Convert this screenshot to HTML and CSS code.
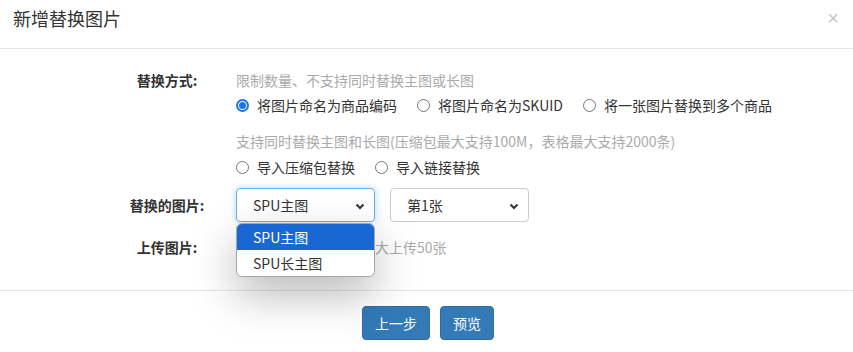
FILE: index.html
```html
<!DOCTYPE html>
<html lang="zh-CN">
<head>
    <meta charset="UTF-8">
    <title>新增替换图片</title>
    <link rel="stylesheet" href="styles.css">
</head>
<body>
    <div class="modal">
        <div class="modal-header">
            <span class="modal-title">新增替换图片</span>
            <span class="close">&times;</span>
        </div>

        <div class="modal-body">
            <div class="form-row">
                <div class="form-label">替换方式:</div>
                <div class="form-control">
                    <div class="hint">限制数量、不支持同时替换主图或长图</div>
                    <div class="radio-line">
                        <label class="radio checked"><i></i>将图片命名为商品编码</label>
                        <label class="radio"><i></i>将图片命名为SKUID</label>
                        <label class="radio"><i></i>将一张图片替换到多个商品</label>
                    </div>
                    <div class="hint hint-gap">支持同时替换主图和长图(压缩包最大支持100M，表格最大支持2000条)</div>
                    <div class="radio-line radio-line-2">
                        <label class="radio"><i></i>导入压缩包替换</label>
                        <label class="radio"><i></i>导入链接替换</label>
                    </div>
                </div>
            </div>

            <div class="form-row row-select">
                <div class="form-label">替换的图片:</div>
                <div class="select focus">
                    SPU主图
                    <svg class="chevron" width="10" height="7" viewBox="0 0 10 7"><polyline points="1.5,1.5 5,5 8.5,1.5" fill="none" stroke="#333" stroke-width="2"/></svg>
                    <div class="dropdown">
                        <div class="option selected">SPU主图</div>
                        <div class="option">SPU长主图</div>
                    </div>
                </div>
                <div class="select">
                    第1张
                    <svg class="chevron" width="10" height="7" viewBox="0 0 10 7"><polyline points="1.5,1.5 5,5 8.5,1.5" fill="none" stroke="#333" stroke-width="2"/></svg>
                </div>
            </div>

            <div class="form-row row-upload">
                <div class="form-label">上传图片:</div>
                <div class="upload">
                    <span class="upload-btn"></span>
                    <span class="hint">大上传50张</span>
                </div>
            </div>
        </div>

        <div class="modal-footer">
            <button class="btn">上一步</button>
            <button class="btn">预览</button>
        </div>
    </div>
</body>
</html>
```

FILE: styles.css
```css
body {
    margin: 0;
    background: #fff;
    font-family: "Noto Sans CJK SC", "Open Sans", sans-serif;
    font-size: 14px;
    color: #333;
}
.modal {
    width: 853px;
    height: 352px;
    overflow: hidden;
}
.modal-header {
    height: 48px;
    border-bottom: 1px solid #e5e5e5;
    display: flex;
    align-items: center;
    justify-content: space-between;
    padding: 0 14px 0 13px;
}
.modal-title {
    font-size: 18px;
    line-height: 20px;
    margin-top: -12px;
}
.close {
    font-family: "Liberation Sans", sans-serif;
    font-size: 20px;
    color: #c8c8c8;
    margin-top: -12px;
}
.modal-body {
    height: 242px;
    border-bottom: 1px solid #e5e5e5;
    padding-top: 21px;
    box-sizing: border-box;
}
.form-row {
    display: flex;
    padding-left: 100px;
}
.form-label {
    width: 134px;
    padding-right: 2px;
    text-align: center;
    font-weight: bold;
    line-height: 20px;
    color: #333;
}
.hint {
    color: #aaa;
    line-height: 20px;
}
.hint-gap {
    margin-top: 16px;
}
.radio-line {
    display: flex;
    gap: 20px;
    margin-top: 5px;
    line-height: 20px;
}
.radio-line-2 {
    margin-top: 6px;
}
.radio {
    display: flex;
    align-items: center;
}
.radio i {
    width: 11px;
    height: 11px;
    border: 1px solid #767676;
    border-radius: 50%;
    margin-right: 8px;
    position: relative;
}
.radio.checked i {
    border: 2px solid #1a73e8;
    width: 9px;
    height: 9px;
}
.radio.checked i::after {
    content: "";
    position: absolute;
    left: 1px;
    top: 1px;
    width: 7px;
    height: 7px;
    border-radius: 50%;
    background: #1a73e8;
}
.row-select {
    margin-top: 11px;
    align-items: center;
}
.select {
    position: relative;
    width: 139px;
    height: 34px;
    box-sizing: border-box;
    border: 1px solid #ccc;
    border-radius: 4px;
    padding-left: 16px;
    display: flex;
    align-items: center;
    color: #333;
    margin-right: 15px;
}
.select.focus {
    border-color: #66afe9;
    box-shadow: 0 0 6px rgba(102, 175, 233, 0.5);
}
.chevron {
    position: absolute;
    right: 9px;
    top: 14px;
}
.dropdown {
    position: absolute;
    left: -1px;
    top: 34px;
    width: 139px;
    box-sizing: border-box;
    border: 1px solid #a6a6a6;
    border-radius: 6px;
    background: #fff;
    overflow: hidden;
    z-index: 5;
    box-shadow: 0 18px 45px rgba(0, 0, 0, 0.28);
}
.option {
    height: 26px;
    line-height: 26px;
    padding-left: 16px;
    color: #333;
}
.option.selected {
    background: #1967d2;
    color: #fff;
}
.row-upload {
    margin-top: 15px;
}
.upload {
    display: flex;
    align-items: center;
    line-height: 20px;
}
.upload-btn {
    width: 139px;
}
.modal-footer {
    display: flex;
    justify-content: center;
    gap: 10px;
    padding-top: 15px;
    padding-left: 3px;
}
.btn {
    font-family: inherit;
    font-size: 14px;
    line-height: 20px;
    height: 34px;
    padding: 6px 12px;
    color: #fff;
    background: #337ab7;
    border: 1px solid #2e6da4;
    border-radius: 4px;
}
```
